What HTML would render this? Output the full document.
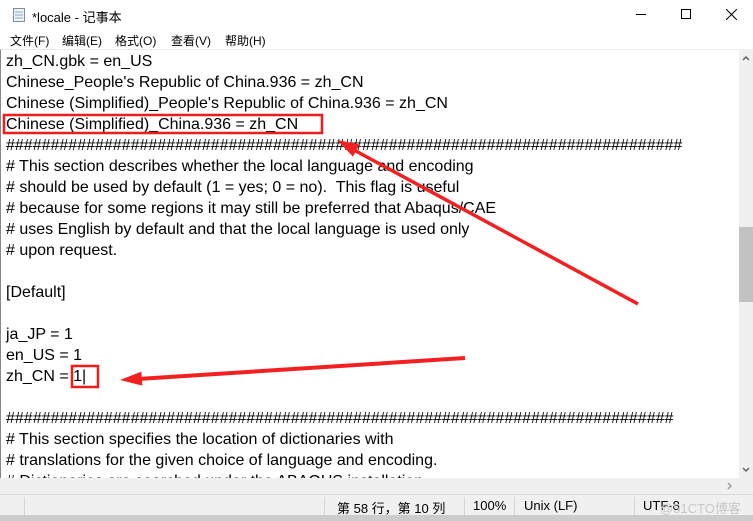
<!DOCTYPE html>
<html><head><meta charset="utf-8"><style>
*{margin:0;padding:0;box-sizing:border-box}
body{width:753px;height:521px;overflow:hidden;background:#fff;position:relative;font-family:"Liberation Sans","Noto Sans CJK SC",sans-serif}
.title{position:absolute;left:0;top:0;width:753px;height:30px;background:#fff;font-size:12px}
.menu{position:absolute;left:0;top:30px;width:753px;height:19px;font-size:12px;background:#fff}
.menu span{position:absolute;top:2px}
.text{position:absolute;left:0;top:49px;width:739px;height:429px;border-left:1px solid #888;border-top:1px solid #e8e8e8;overflow:hidden;background:#fff}
.text pre{font-family:"Liberation Sans",sans-serif;font-size:16px;line-height:21px;padding-left:5px;padding-top:1px;color:#000;white-space:pre}
.vs{position:absolute;left:739px;top:49px;width:14px;height:429px;background:#f0f0f0}
.hs{position:absolute;left:0;top:478px;width:753px;height:16px;background:#f0f0f0}
.status{position:absolute;left:0;top:494px;width:753px;height:21px;background:#f0f0f0;border-top:1px solid #dadada;font-size:13px}
.status span{position:absolute;top:3px}
.sep{position:absolute;top:2px;width:1px;height:18px;background:#d7d7d7}
.bot{position:absolute;left:0;top:515px;width:753px;height:6px;background:#ccc}
</style></head><body>
<div class="title">
<svg style="position:absolute;left:12px;top:7px" width="14" height="16"><rect x="1.5" y="1.5" width="11" height="13" fill="#eaf3fa" stroke="#7a8fa0"/><line x1="3" y1="5" x2="11" y2="5" stroke="#9ab"/><line x1="3" y1="8" x2="11" y2="8" stroke="#9ab"/><line x1="3" y1="11" x2="11" y2="11" stroke="#9ab"/></svg>
<span style="position:absolute;left:32px;top:7px;font-size:13px">*locale - 记事本</span>
<div style="position:absolute;left:636px;top:14px;width:10px;height:1px;background:#000"></div>
<div style="position:absolute;left:681px;top:9px;width:10px;height:10px;border:1px solid #000"></div>
<svg style="position:absolute;left:726px;top:9px" width="11" height="11"><path d="M0 0L11 11M11 0L0 11" stroke="#000" stroke-width="1"/></svg>
</div>
<div class="menu"><span style="left:10px">文件(F)</span><span style="left:62px">编辑(E)</span><span style="left:115px">格式(O)</span><span style="left:171px">查看(V)</span><span style="left:225px">帮助(H)</span></div>
<div class="text"><pre>zh_CN.gbk = en_US
Chinese_People's Republic of China.936 = zh_CN
Chinese (Simplified)_People's Republic of China.936 = zh_CN
Chinese (Simplified)_China.936 = zh_CN
############################################################################
# This section describes whether the local language and encoding
# should be used by default (1 = yes; 0 = no).  This flag is useful
# because for some regions it may still be preferred that Abaqus/CAE
# uses English by default and that the local language is used only
# upon request.

[Default]

ja_JP = 1
en_US = 1
zh_CN = 1<span style="font-weight:100">|</span>

###########################################################################
# This section specifies the location of dictionaries with
# translations for the given choice of language and encoding.
# Dictionaries are searched under the ABAQUS installation</pre></div>
<div class="vs"><svg style="position:absolute;left:3px;top:6px" width="8" height="6"><path d="M1 5L4 2L7 5" stroke="#606060" stroke-width="1.5" fill="none"/></svg>
<div style="position:absolute;left:0;top:178px;width:14px;height:75px;background:#c2c2c2"></div>
<svg style="position:absolute;left:3px;top:418px" width="8" height="6"><path d="M1 1L4 4L7 1" stroke="#606060" stroke-width="1.5" fill="none"/></svg></div>
<div class="hs"><svg style="position:absolute;left:727px;top:4px" width="6" height="8"><path d="M1 1L4 4L1 7" stroke="#a0a0a0" stroke-width="1.5" fill="none"/></svg></div>
<div class="status">
<div class="sep" style="left:24px"></div><div class="sep" style="left:324px"></div><div class="sep" style="left:464px"></div><div class="sep" style="left:514px"></div><div class="sep" style="left:634px"></div>
<span style="left:337px">第 58 行，第 10 列</span><span style="left:473px">100%</span><span style="left:524px">Unix (LF)</span><span style="left:643px">UTF-8</span>
<span style="left:660px;color:#c8c8c8;font-size:13px;top:3px">@51CTO博客</span>
</div>
<div class="bot"></div>
<svg style="position:absolute;left:0;top:0" width="753" height="521">
<rect x="4" y="115" width="318" height="18" fill="none" stroke="#f21b1b" stroke-width="2.5"/>
<rect x="72" y="366" width="26" height="21" fill="none" stroke="#f21b1b" stroke-width="2.5"/>
<path d="M638 304L354 150" stroke="#f22020" stroke-width="3.5"/>
<path d="M337 140L359.6 144.4L353 156.6Z" fill="#f22020"/>
<path d="M465 358L138 379" stroke="#f22020" stroke-width="4"/>
<path d="M120 380L142.3 385.6L141.4 371.6Z" fill="#f22020"/>
</svg>
</body></html>
